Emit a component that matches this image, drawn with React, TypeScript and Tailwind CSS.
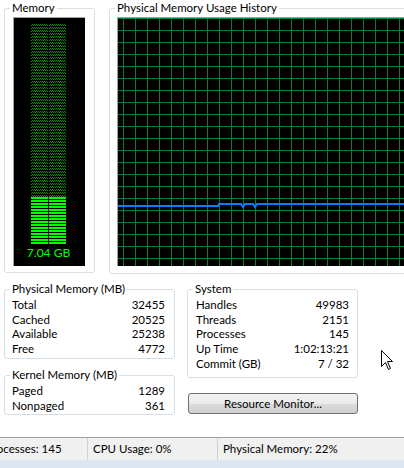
import React from "react";

const physical = [
  ["Total", "32455"],
  ["Cached", "20525"],
  ["Available", "25238"],
  ["Free", "4772"],
];

const kernel = [
  ["Paged", "1289"],
  ["Nonpaged", "361"],
];

const system = [
  ["Handles", "49983"],
  ["Threads", "2151"],
  ["Processes", "145"],
  ["Up Time", "1:02:13:21"],
  ["Commit (GB)", "7 / 32"],
];

function GroupBox({ title, className, children }: { title: string; className: string; children?: React.ReactNode }) {
  return (
    <fieldset className={`border border-[#d5dfe5] rounded-[3px] m-0 p-0 min-w-0 shrink-0 ${className}`}>
      <legend className="ml-[5px] px-[2px] leading-[14px] text-[#000]">{title}</legend>
      {children}
    </fieldset>
  );
}

function Rows({ rows }: { rows: string[][] }) {
  return (
    <div className="flex flex-col pt-[2px]">
      {rows.map(([k, v]) => (
        <div key={k} className="flex justify-between h-[14.67px] leading-[14.67px]">
          <span>{k}</span>
          <span>{v}</span>
        </div>
      ))}
    </div>
  );
}

function MemoryMeter() {
  const bars = Array.from({ length: 16 }, (_, i) => 179 + i * 3);
  return (
    <div className="ml-[8px] mt-[2px] w-[72px] h-[249px] bg-black border-t border-l border-[#a0a0a0] flex flex-col">
      <svg width="71" height="228" className="block">
        <defs>
          <pattern id="dim" width="2" height="3" patternUnits="userSpaceOnUse">
            <rect x="0" y="0" width="1" height="1" fill="#009000" />
            <rect x="1" y="1" width="1" height="1" fill="#009000" />
          </pattern>
        </defs>
        <rect x="17" y="5" width="17" height="174" fill="url(#dim)" />
        <rect x="35" y="5" width="17" height="174" fill="url(#dim)" />
        {bars.map((y) => (
          <g key={y}>
            <rect x="17" y={y} width="17" height="2" fill="#00ff00" />
            <rect x="35" y={y} width="17" height="2" fill="#00ff00" />
          </g>
        ))}
      </svg>
      <div className="text-center text-[#00ff00] text-[12px] leading-[14px] pr-[2px]">7.04 GB</div>
    </div>
  );
}

function HistoryGraph() {
  const hLines = Array.from({ length: 21 }, (_, i) => i * 12);
  const vLines = Array.from({ length: 25 }, (_, i) => 5 + i * 12);
  const pts = "0,188 100,188 101,186 123,186 125,189 127,186 135,186 137,189 139,186 300,186";
  return (
    <div className="ml-[7px] mt-[2px] w-[300px] h-[249px] bg-black border-t border-l border-[#a0a0a0]">
      <svg width="299" height="248" className="block">
        {hLines.map((y) => (
          <rect key={`h${y}`} x="0" y={y} width="299" height="1" fill="#008040" />
        ))}
        {vLines.map((x) => (
          <rect key={`v${x}`} x={x} y="0" width="1" height="248" fill="#008040" />
        ))}
        <polyline points={pts} fill="none" stroke="#0a7dff" strokeWidth="2" />
      </svg>
    </div>
  );
}

export default function App() {
  return (
    <div className="relative w-[404px] h-[468px] overflow-hidden bg-white text-black text-[11.5px] font-['Lato',sans-serif]">
      <div className="h-[437px] flex flex-col">
        <div className="flex pt-[1px] pl-[4px] gap-[14px]">
          <GroupBox title="Memory" className="w-[91px] h-[272px]">
            <MemoryMeter />
          </GroupBox>
          <GroupBox title="Physical Memory Usage History" className="w-[300px] h-[273px]">
            <HistoryGraph />
          </GroupBox>
        </div>

        <div className="flex pl-[4px] mt-[8px] gap-[12px]">
          <div className="flex flex-col w-[171px]">
            <GroupBox title="Physical Memory (MB)" className="h-[77px]">
              <div className="pl-[7px] pr-[9px]">
                <Rows rows={physical} />
              </div>
            </GroupBox>
            <GroupBox title="Kernel Memory (MB)" className="mt-[9px] h-[47px]">
              <div className="pl-[7px] pr-[9px]">
                <Rows rows={kernel} />
              </div>
            </GroupBox>
          </div>
          <div className="flex flex-col w-[171px]">
            <GroupBox title="System" className="h-[96px]">
              <div className="pl-[8px] pr-[8px]">
                <Rows rows={system} />
              </div>
            </GroupBox>
            <button className="mt-[15px] ml-[1px] w-[170px] h-[21px] border border-[#707070] rounded-[3px] bg-[linear-gradient(#f2f2f2_0%,#ebebeb_50%,#dddddd_50%,#cfcfcf_100%)] text-[11.5px] leading-[19px] text-center">
              Resource Monitor...
            </button>
          </div>
        </div>
      </div>

      <div className="h-[23px] border-t border-[#a0a0a0] bg-[#f0f0f0] flex items-center text-[11.5px]">
        <div className="ml-[-19px] w-[107px] h-full pl-[5px] flex items-center border-r border-[#d0d0d0]">Processes: 145</div>
        <div className="w-[130px] h-full pl-[5px] flex items-center border-r border-[#d0d0d0]">CPU Usage: 0%</div>
        <div className="pl-[5px] h-full flex items-center">Physical Memory: 22%</div>
      </div>
      <div className="h-[8px] bg-[#dce6f3]" />

      <svg className="absolute left-[381px] top-[350px]" width="13" height="21" viewBox="0 0 13 21">
        <path d="M0.5 0.5 L0.5 16.5 L4.5 12.5 L7.5 19.5 L9.5 18.5 L6.5 11.5 L11.5 11.5 Z" fill="#fff" stroke="#000" strokeWidth="1" strokeLinejoin="miter" />
      </svg>
    </div>
  );
}
